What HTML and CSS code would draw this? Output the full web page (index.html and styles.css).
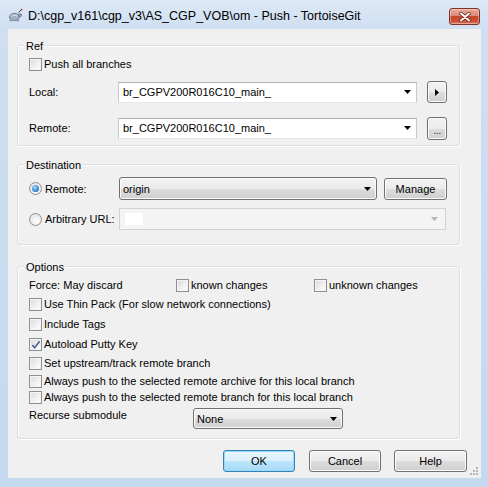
FILE: index.html
```html
<!DOCTYPE html>
<html>
<head>
<meta charset="utf-8">
<title>Push - TortoiseGit</title>
<link rel="stylesheet" href="styles.css">
</head>
<body>
<div class="window">
  <div class="titlebar">
    <svg class="app-icon" viewBox="0 0 15 15">
      <ellipse cx="6.5" cy="9" rx="5" ry="3.6" fill="#9fb0c6" stroke="#5f6f86" stroke-width="0.8"/>
      <path d="M3.5 8.2 Q6.5 5.8 9.5 8.2" fill="none" stroke="#e8eef6" stroke-width="0.9"/>
      <circle cx="12" cy="7.2" r="1.6" fill="#8d9db3" stroke="#5f6f86" stroke-width="0.6"/>
      <circle cx="2.6" cy="12.4" r="1.1" fill="#7f8fa6"/>
      <circle cx="9.8" cy="12.6" r="1.1" fill="#7f8fa6"/>
      <path d="M10.5 4.5 L13.5 1.5" stroke="#3a3a3a" stroke-width="1"/>
      <circle cx="13.6" cy="1.6" r="0.9" fill="#c0392b"/>
    </svg>
    <span class="title">D:\cgp_v161\cgp_v3\AS_CGP_VOB\om - Push - TortoiseGit</span>
    <div class="close">
      <svg viewBox="0 0 12 10" class="close-x">
        <path d="M2 1.5 L10 8.5 M10 1.5 L2 8.5" stroke="#5a1a12" stroke-width="3.4" stroke-linecap="round"/>
        <path d="M2 1.5 L10 8.5 M10 1.5 L2 8.5" stroke="#ffffff" stroke-width="2" stroke-linecap="round"/>
      </svg>
    </div>
  </div>

  <div class="client">
    <section class="group group-ref">
      <span class="group-title">Ref</span>
      <label class="check"><span class="box"></span><span>Push all branches</span></label>
      <div class="field-row row-local">
        <span class="field-label">Local:</span>
        <div class="combo edit wide"><span class="combo-text">br_CGPV200R016C10_main_</span><svg class="arrow" viewBox="0 0 7 4"><path d="M0 0 H7 L3.5 4 Z"/></svg></div>
        <button class="btn tiny"><svg class="play" viewBox="0 0 4 7"><path d="M0 0 L4 3.5 L0 7 Z"/></svg></button>
      </div>
      <div class="field-row row-remote">
        <span class="field-label">Remote:</span>
        <div class="combo edit wide"><span class="combo-text">br_CGPV200R016C10_main_</span><svg class="arrow" viewBox="0 0 7 4"><path d="M0 0 H7 L3.5 4 Z"/></svg></div>
        <button class="btn tiny tall dots">...</button>
      </div>
    </section>

    <section class="group group-dest">
      <span class="group-title">Destination</span>
      <div class="field-row row-dest1">
        <label class="radio-label"><span class="radio on"></span><span>Remote:</span></label>
        <div class="combo list origin"><span class="combo-text">origin</span><svg class="arrow" viewBox="0 0 7 4"><path d="M0 0 H7 L3.5 4 Z"/></svg></div>
        <button class="btn manage">Manage</button>
      </div>
      <div class="field-row row-dest2">
        <label class="radio-label"><span class="radio"></span><span>Arbitrary URL:</span></label>
        <div class="combo disabled url"><span class="caret-patch"></span><svg class="arrow grey" viewBox="0 0 7 4"><path d="M0 0 H7 L3.5 4 Z"/></svg></div>
      </div>
    </section>

    <section class="group group-opt">
      <span class="group-title">Options</span>
      <div class="force-row">
        <span class="force-label">Force: May discard</span>
        <label class="check known"><span class="box"></span><span>known changes</span></label>
        <label class="check"><span class="box"></span><span>unknown changes</span></label>
      </div>
      <label class="check opt-thin"><span class="box"></span><span>Use Thin Pack (For slow network connections)</span></label>
      <label class="check opt-tags"><span class="box"></span><span>Include Tags</span></label>
      <label class="check opt-putty"><span class="box checked"><svg viewBox="0 0 11 11"><path d="M1.5 5.5 L4 8.5 L9.5 1.5" fill="none" stroke="#4a5f97" stroke-width="1.8"/></svg></span><span>Autoload Putty Key</span></label>
      <label class="check opt-up"><span class="box"></span><span>Set upstream/track remote branch</span></label>
      <label class="check opt-arch"><span class="box"></span><span>Always push to the selected remote archive for this local branch</span></label>
      <label class="check opt-br"><span class="box"></span><span>Always push to the selected remote branch for this local branch</span></label>
      <div class="field-row row-recurse">
        <span class="recurse-label">Recurse submodule</span>
        <div class="combo list recurse"><span class="combo-text">None</span><svg class="arrow" viewBox="0 0 7 4"><path d="M0 0 H7 L3.5 4 Z"/></svg></div>
      </div>
    </section>

    <div class="actions">
      <button class="btn action default">OK</button>
      <button class="btn action cancel">Cancel</button>
      <button class="btn action help">Help</button>
    </div>

    <svg class="grip" viewBox="0 0 10 10">
      <g fill="#b8b8b8">
        <rect x="7" y="1" width="2" height="2"/>
        <rect x="4" y="4" width="2" height="2"/><rect x="7" y="4" width="2" height="2"/>
        <rect x="1" y="7" width="2" height="2"/><rect x="4" y="7" width="2" height="2"/><rect x="7" y="7" width="2" height="2"/>
      </g>
    </svg>
  </div>
</div>
</body>
</html>
```

FILE: styles.css
```css
* { box-sizing: border-box; }
html, body { margin: 0; padding: 0; }
body {
  width: 488px;
  height: 487px;
  overflow: hidden;
  font-family: "Liberation Sans", Arial, sans-serif;
  font-size: 11px;
  color: #000;
  background: linear-gradient(180deg, #dce8f6 0px, #cfdff1 30px, #c4d8ee 100%);
}
.window {
  display: flex;
  flex-direction: column;
  width: 488px;
  height: 487px;
}

/* title bar */
.titlebar {
  height: 29px;
  flex: none;
  display: flex;
  align-items: flex-start;
  padding-left: 8px;
}
.app-icon { width: 15px; height: 15px; margin-top: 8px; margin-right: 5px; flex: none; }
.title {
  font-size: 12.5px;
  line-height: 14px;
  margin-top: 9px;
  white-space: nowrap;
  color: #000;
}
.close {
  margin-left: auto;
  margin-right: 8px;
  margin-top: 8px;
  width: 31px;
  height: 17px;
  border: 1px solid #7d3127;
  border-radius: 3px;
  background: linear-gradient(180deg, #e9a99b 0%, #d98a78 45%, #c5452f 50%, #c94f36 80%, #e07a5d 100%);
  box-shadow: inset 0 0 0 1px rgba(255,255,255,0.35);
  display: flex;
  align-items: center;
  justify-content: center;
}
.close-x { width: 12px; height: 10px; }

/* client area */
.client {
  position: relative;
  flex: none;
  margin: 0 7px 0 8px;
  height: 449px;
  background: #f0f0f0;
  padding: 16px 14px 0 9px;
  display: flex;
  flex-direction: column;
  align-items: flex-start;
}

/* group boxes */
.group {
  position: relative;
  width: 443px;
  border: 1px solid #d5dfe5;
  border-radius: 3px;
  box-shadow: inset 1px 1px 0 #fff, 1px 1px 0 #fff;
  padding: 12px 11px 6px 11px;
  display: flex;
  flex-direction: column;
}
.group-title {
  position: absolute;
  top: -6px;
  left: 6px;
  padding: 0 2px;
  line-height: 13px;
  background: #f0f0f0;
}
.group-dest { margin-top: 18px; padding-bottom: 14px; }
.group-opt { margin-top: 21px; padding-bottom: 9px; }

/* checkbox */
.check {
  display: flex;
  align-items: center;
  height: 13px;
  line-height: 13px;
  white-space: nowrap;
}
.box {
  width: 13px;
  height: 13px;
  flex: none;
  margin-right: 2px;
  border: 1px solid #8e8f8f;
  background: linear-gradient(135deg, #d8d8d8 0%, #f2f2f2 60%, #fdfdfd 100%);
  box-shadow: inset 0 0 0 1px #f4f4f4;
  display: flex;
  align-items: center;
  justify-content: center;
}
.box svg { width: 10px; height: 10px; }

/* radio */
.radio-label {
  display: flex;
  align-items: center;
  width: 90px;
  flex: none;
  height: 13px;
}
.radio {
  width: 13px;
  height: 13px;
  flex: none;
  margin-right: 3px;
  border-radius: 50%;
  border: 1px solid #8e8f8f;
  background: radial-gradient(circle at 60% 65%, #ffffff 0%, #e6e6e6 70%, #cfcfcf 100%);
  position: relative;
}
.radio.on::after {
  content: "";
  position: absolute;
  left: 2px;
  top: 2px;
  width: 7px;
  height: 7px;
  border-radius: 50%;
  background: radial-gradient(circle at 40% 35%, #a8dcfb 0%, #3d8fd5 55%, #1b5b9e 100%);
}

/* field rows */
.field-row {
  display: flex;
  align-items: center;
  height: 22px;
}
.row-local { margin-top: 10px; }
.row-remote { margin-top: 14px; }
.field-label { width: 89px; flex: none; }
.row-dest1 { height: 23px; }
.row-dest2 { margin-top: 8px; }

/* combos */
.combo {
  height: 21px;
  display: flex;
  align-items: center;
  padding: 0 4px 0 4px;
  flex: none;
}
.combo-text { flex: 1; white-space: nowrap; overflow: hidden; }
.arrow { width: 7px; height: 4px; flex: none; fill: #000; margin-right: 1px; }
.arrow.grey { fill: #b4b4b4; margin-right: 3px; }
.combo.edit {
  background: #fff;
  border: 1px solid;
  border-color: #abadb3 #c6cbd2 #e3e9ef #c6cbd2;
}
.combo.wide { width: 299px; margin-right: 10px; }
.combo.list {
  border: 1px solid #707070;
  border-radius: 3px;
  background: linear-gradient(180deg, #f2f2f2 0%, #ebebeb 50%, #dddddd 51%, #cfcfcf 100%);
  box-shadow: inset 0 0 0 1px #fbfbfb;
  padding-left: 3px;
}
.combo.origin { width: 258px; height: 23px; margin-right: 7px; }
.combo.disabled {
  width: 327px;
  height: 22px;
  border: 1px solid #cfd2d6;
  background: #f4f4f4;
  padding-left: 5px;
}
.caret-patch { width: 18px; height: 12px; background: #fff; margin-right: auto; }

/* buttons */
.btn {
  font-family: "Liberation Sans", Arial, sans-serif;
  font-size: 11px;
  color: #000;
  border: 1px solid #707070;
  border-radius: 3px;
  background: linear-gradient(180deg, #f2f2f2 0%, #ebebeb 50%, #dddddd 51%, #cfcfcf 100%);
  box-shadow: inset 0 0 0 1px #fcfcfc;
  padding: 0;
  margin: 0;
  display: flex;
  align-items: center;
  justify-content: center;
  flex: none;
}
.btn.tiny { width: 20px; height: 22px; }
.btn.tiny.tall { height: 23px; }
.play { width: 4px; height: 7px; fill: #000; }
.btn.dots { align-items: flex-end; padding-bottom: 5px; line-height: 8px; color: #333; letter-spacing: -0.5px; }
.btn.manage { width: 63px; height: 22px; }

/* options */
.force-row {
  display: flex;
  align-items: center;
  height: 13px;
}
.force-label { width: 147px; flex: none; line-height: 13px; }
.check.known { width: 138px; flex: none; }
.opt-thin { margin-top: 6px; }
.opt-tags { margin-top: 7px; }
.opt-putty { margin-top: 7px; }
.opt-up { margin-top: 6px; }
.opt-arch { margin-top: 5px; }
.opt-br { margin-top: 3px; }
.row-recurse { margin-top: 4px; height: 21px; align-items: flex-start; }
.recurse-label { width: 164px; flex: none; line-height: 13px; margin-top: 1px; }
.combo.recurse { width: 150px; }

/* actions */
.actions {
  align-self: stretch;
  display: flex;
  justify-content: flex-end;
  margin-top: 11px;
}
.btn.action { width: 72px; height: 22px; }
.btn.default {
  margin-right: 14px;
  border-color: #3c7fb1;
  background: linear-gradient(180deg, #eaf6fd 0%, #d9f0fc 50%, #bee6fd 51%, #a7d9f5 100%);
  box-shadow: inset 0 0 0 1px #8fdcfb;
}
.btn.cancel { margin-right: 13px; }
.btn.help { width: 73px; }

.grip {
  position: absolute;
  right: 2px;
  bottom: 2px;
  width: 10px;
  height: 10px;
}
```
